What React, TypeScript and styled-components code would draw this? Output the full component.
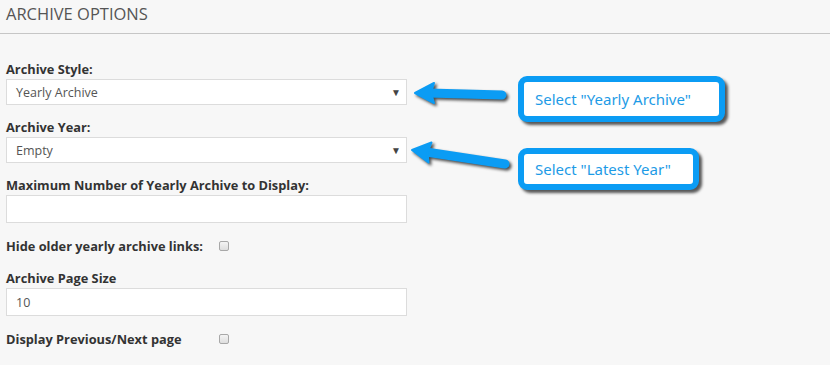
import styled, { createGlobalStyle } from "styled-components";

const GlobalStyle = createGlobalStyle`
  html, body {
    margin: 0;
    padding: 0;
    background: #f7f7f7;
  }
  body {
    font-family: "Open Sans", "Liberation Sans", sans-serif;
    color: #333;
  }
`;

const Page = styled.div`
  position: relative;
  width: 830px;
  height: 365px;
  overflow: hidden;
  background: #f7f7f7;
`;

const Header = styled.div`
  padding: 4px 6px 0;
  height: 29px;
  border-bottom: 1px solid #c6c6c6;
`;

const Title = styled.h2`
  margin: 0;
  font-size: 16.5px;
  font-weight: 400;
  color: #555;
  line-height: 20px;
`;

const Form = styled.div`
  padding: 26px 6px 0;
  display: flex;
  flex-direction: column;
  gap: 13px;
`;

const Group = styled.div`
  display: flex;
  flex-direction: column;
  gap: 1px;
`;

const Label = styled.label`
  font-size: 12.8px;
  font-weight: 700;
  line-height: 18px;
  color: #333;
`;

const Field = styled.div<{ $input?: boolean }>`
  box-sizing: border-box;
  width: 401px;
  height: ${(p) => (p.$input ? 28 : 26)}px;
  background: #fff;
  border: 1px solid #dcdcdc;
  display: flex;
  align-items: center;
  justify-content: space-between;
  padding: 0 5px 0 9px;
  font-size: 12.5px;
  color: #555;
`;

const Caret = styled.span`
  font-size: 10px;
  color: #444;
`;

const CheckRow = styled.div`
  display: flex;
  align-items: center;
  height: 20px;
`;

const CheckLabel = styled(Label)`
  width: 213px;
`;

const Box = styled.span`
  box-sizing: border-box;
  width: 10px;
  height: 10px;
  border: 1px solid #a8a8a8;
  border-radius: 2px;
  background: linear-gradient(#f4f4f4, #dedede);
`;

const Overlay = styled.svg`
  position: absolute;
  left: 0;
  top: 0;
  pointer-events: none;
  filter: drop-shadow(2px 2px 1.5px rgba(0, 0, 0, 0.7));
`;

const Callout = styled.div<{ $top: number; $width: number; $height: number }>`
  position: absolute;
  left: 518px;
  top: ${(p) => p.$top}px;
  width: ${(p) => p.$width}px;
  height: ${(p) => p.$height}px;
  box-sizing: border-box;
  border: 6px solid #0b9cf4;
  border-radius: 9px;
  background: #fff;
  box-shadow: 3px 3px 3px rgba(0, 0, 0, 0.65);
  display: flex;
  align-items: center;
  padding-left: 11px;
  font-family: "Noto Sans", "Open Sans", sans-serif;
  font-size: 15px;
  color: #1d9be6;
`;

const BLUE = "#0b9cf4";

export default function App() {
  return (
    <Page>
      <GlobalStyle />
      <Header>
        <Title>ARCHIVE OPTIONS</Title>
      </Header>
      <Form>
        <Group>
          <Label>Archive Style:</Label>
          <Field>
            Yearly Archive
            <Caret>▼</Caret>
          </Field>
        </Group>
        <Group>
          <Label>Archive Year:</Label>
          <Field>
            Empty
            <Caret>▼</Caret>
          </Field>
        </Group>
        <Group>
          <Label>Maximum Number of Yearly Archive to Display:</Label>
          <Field $input />
        </Group>
        <CheckRow>
          <CheckLabel>Hide older yearly archive links:</CheckLabel>
          <Box />
        </CheckRow>
        <Group>
          <Label>Archive Page Size</Label>
          <Field $input>10</Field>
        </Group>
        <CheckRow>
          <CheckLabel>Display Previous/Next page</CheckLabel>
          <Box />
        </CheckRow>
      </Form>

      <Overlay width="830" height="365" viewBox="0 0 830 365">
        {/* arrow to Archive Style */}
        <line x1="502" y1="95" x2="428" y2="93" stroke={BLUE} strokeWidth="9" strokeLinecap="round" />
        <path d="M415 93 L434 83 L431 93 L434 103 Z" fill={BLUE} stroke={BLUE} strokeWidth="2" strokeLinejoin="round" />
        {/* arrow to Archive Year */}
        <line x1="505" y1="164" x2="426" y2="152" stroke={BLUE} strokeWidth="9" strokeLinecap="round" />
        <path d="M412 150 L431.5 142.5 L427.5 152.5 L428.5 162.5 Z" fill={BLUE} stroke={BLUE} strokeWidth="2" strokeLinejoin="round" />
      </Overlay>

      <Callout $top={76} $width={207} $height={46}>Select "Yearly Archive"</Callout>
      <Callout $top={148} $width={181} $height={42}>Select "Latest Year"</Callout>
    </Page>
  );
}
